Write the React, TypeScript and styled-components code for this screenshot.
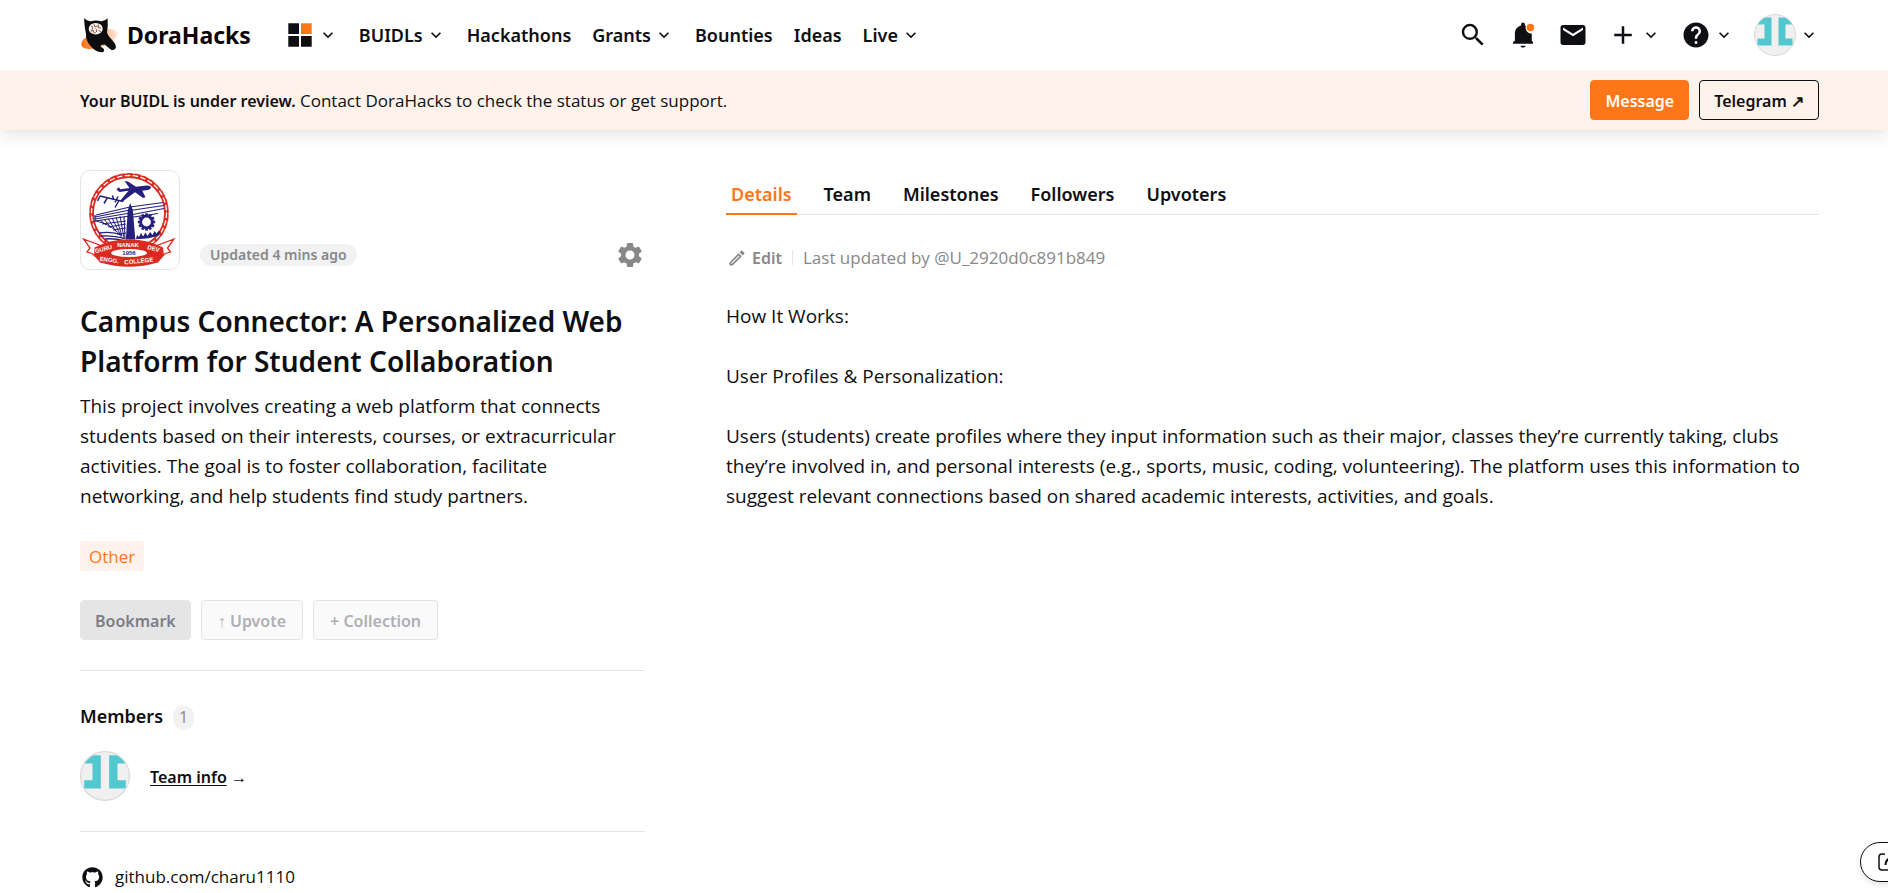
import React from "react";
import styled, { createGlobalStyle } from "styled-components";
import {
  MdAdd,
  MdEmail,
  MdExpandMore,
  MdHelp,
  MdOutlineEdit,
  MdSearch,
  MdSettings,
} from "react-icons/md";
import { FaGithub } from "react-icons/fa";

const ink = "#0e0f12";
const orange = "#ff7619";
const peach = "#fff2eb";
const muted = "#888889";
const line = "#e5e5e6";
const strongFont = `"Segoe UI", "Noto Sans", "Open Sans", sans-serif`;
const bodyFont = `"Segoe UI", "Open Sans", "Noto Sans", sans-serif`;

const GlobalStyle = createGlobalStyle`
  *, *::before, *::after { box-sizing: border-box; }
  body {
    margin: 0;
    background: #fff;
    color: ${ink};
    font: 400 19px/30px ${bodyFont};
  }
  h1, h2, p { margin: 0; }
  a { color: inherit; text-decoration: none; }
  button { font: inherit; color: inherit; background: none; border: 0; padding: 0; cursor: pointer; }
  svg { display: block; flex: none; }
`;

const Top = styled.div`
  position: sticky;
  top: 0;
  z-index: 2;
  background: #fff;
  box-shadow: 0 6px 14px rgba(14, 25, 25, 0.1);
`;

const Header = styled.header`
  display: flex;
  align-items: center;
  gap: 34px;
  height: 70px;
  padding: 0 69px 0 80px;
`;

const Brand = styled.a`
  display: flex;
  align-items: center;
  gap: 7px;
  font: 700 23px/30px ${strongFont};
  color: #0b0406;
`;

const Nav = styled.nav`
  display: flex;
  align-items: center;
  gap: 21px;
  font: 600 18px/30px ${strongFont};
`;

const Actions = styled.div`
  display: flex;
  align-items: center;
  gap: 20px;
  margin-left: auto;
`;

const MenuButton = styled.button`
  display: flex;
  align-items: center;
  gap: 3px;
`;

const Banner = styled.section`
  display: flex;
  align-items: center;
  gap: 10px;
  min-height: 60px;
  padding: 10px 69px 10px 80px;
  background: ${peach};
`;

const BannerText = styled.p`
  flex: 1;
  padding-top: 2px;
  font-size: 17px;
  strong {
    font: 600 16px/30px ${strongFont};
  }
`;

type Tone = "primary" | "outline" | "muted" | "ghost";

const tones: Record<Tone, string> = {
  primary: `background: ${orange}; border-color: ${orange}; color: #fff;`,
  outline: `border-color: ${ink};`,
  muted: `background: #e5e5e6; border-color: #e5e5e6; color: #7d7e85;`,
  ghost: `background: #fafafa; border-color: #e2e2e3; color: #aeafb5; padding: 2px 16px 0;`,
};

const Button = styled.button<{ $tone: Tone }>`
  height: 40px;
  padding: 2px 14px 0;
  border: 1px solid;
  border-radius: 4px;
  font: 600 16px/30px ${strongFont};
  white-space: nowrap;
  ${({ $tone }) => tones[$tone]}
`;

const Main = styled.main`
  display: grid;
  grid-template-columns: minmax(0, 565fr) minmax(0, 1093fr);
  gap: 81px;
  padding: 40px 69px 0 80px;
`;

const Identity = styled.div`
  display: flex;
  align-items: flex-end;
  gap: 20px;
`;

const ProjectLogo = styled.div`
  width: 100px;
  height: 100px;
  overflow: hidden;
  border: 1px solid ${line};
  border-radius: 10px;
`;

const IdentityMeta = styled.div`
  display: flex;
  flex: 1;
  align-items: center;
  justify-content: space-between;
  color: ${muted};
`;

const Pill = styled.span`
  padding: 0 10px;
  border-radius: 11px;
  background: #f2f2f2;
  font: 600 14px/22px ${strongFont};
`;

const Title = styled.h1`
  margin-top: 31px;
  font: 600 28px/40px ${strongFont};
`;

const Description = styled.p`
  margin-top: 10px;
`;

const Tag = styled.a`
  display: inline-block;
  margin-top: 30px;
  padding: 1px 9px 0;
  border-radius: 4px;
  background: ${peach};
  color: ${orange};
  font-size: 17px;
  line-height: 29px;
`;

const ButtonRow = styled.div`
  display: flex;
  gap: 10px;
  margin: 29px 0 30px;
`;

const Block = styled.section`
  padding: 30px 0;
  border-top: 1px solid ${line};
`;

const Heading = styled.h2`
  display: flex;
  align-items: center;
  gap: 10px;
  font: 600 18px/30px ${strongFont};
`;

const Count = styled.span`
  width: 21px;
  border-radius: 13px;
  margin-top: 3px;
  background: #f2f2f2;
  color: ${muted};
  font: 400 16px/25px ${bodyFont};
  text-align: center;
`;

const MemberRow = styled.div`
  display: flex;
  align-items: center;
  gap: 20px;
  margin-top: 20px;
`;

const TeamLink = styled.a`
  padding-top: 2px;
  font: 600 16px/30px ${strongFont};
  span {
    text-decoration: underline;
    text-underline-offset: 2px;
  }
`;

const SiteLink = styled.a`
  display: flex;
  align-items: center;
  gap: 12px;
  padding-left: 2px;
  font-size: 17px;
`;

const Tabs = styled.nav`
  display: flex;
  gap: 22px;
  margin-top: 9px;
  box-shadow: inset 0 -1px ${line};
`;

const Tab = styled.a<{ $active?: boolean }>`
  padding: 0 5px 4px;
  border-bottom: 2px solid ${({ $active }) => ($active ? orange : "transparent")};
  color: ${({ $active }) => ($active ? orange : ink)};
  font: 600 18px/30px ${strongFont};
`;

const EditRow = styled.div`
  display: flex;
  align-items: center;
  margin: 28px 0;
  color: ${muted};
  font-size: 17px;
`;

const EditButton = styled.button`
  display: flex;
  align-items: center;
  gap: 5px;
  padding: 0 10px 0 1px;
  font: 600 16px/30px ${strongFont};
`;

const Editor = styled.span`
  position: relative;
  padding-left: 11px;
  &::before {
    content: "";
    position: absolute;
    left: 0;
    top: 7px;
    height: 15px;
    border-left: 1px solid ${line};
  }
`;

const Article = styled.article`
  display: grid;
  gap: 30px;
`;

const Floating = styled.button`
  position: fixed;
  right: -32px;
  bottom: 11px;
  display: flex;
  align-items: center;
  width: 60px;
  height: 40px;
  padding-left: 16px;
  border: 1px solid ${ink};
  border-radius: 20px;
  background: #fff;
  box-shadow: 0 2px 6px rgba(0, 0, 0, 0.12);
`;

const Cat = () => (
  <svg width="40" height="46" viewBox="4 0 40 46" aria-hidden="true">
    <defs>
      <linearGradient id="orbit" x1="0" x2="1">
        <stop offset="0" stopColor="#ff7619" />
        <stop offset=".35" stopColor="#ff8f45" />
        <stop offset="1" stopColor="#ffe9dc" />
      </linearGradient>
    </defs>
    <ellipse cx="23.300" cy="27" rx="19" ry="8" fill="url(#orbit)" transform="rotate(-20 23.300 27)" />
    <path
      fill="#0d0d0f"
      d="M8.200 6Q11.500 10 15 9.200Q20 7.800 25 9.200Q28.500 9.500 31.600 6.300Q32.200 14 31 20.500Q32 24 36.500 28.500Q40.500 32.500 39.800 36Q38.500 38.800 35 37.800L28.600 32.500L25 33Q23.500 34.500 27.500 36.500Q29 39.500 26.500 40.300Q20 40.500 14.500 34Q9.500 28.500 10 22Q8 12 8.200 6Z"
    />
    <ellipse cx="19.700" cy="16.700" rx="7" ry="5.800" fill="#fff6ef" />
    <g stroke="#6b3f2e" strokeWidth=".9" fill="none" strokeLinecap="round">
      <path d="M15 14l2 1.500-1 2M18 12.500l1 2.500 2-1M22.500 13l-.5 2.500 2.500.5M15 19l2.500-.5.500 2.500M20 17l1 2-1.500 1.500M23 18.500l1.500 1" />
    </g>
  </svg>
);

const Apps = () => (
  <svg width="30" height="30" viewBox="0 0 30 30" aria-hidden="true">
    <path fill={ink} d="M3.300 3.300h10.700v10.700H3.300zM3.300 16h10.700v10.700H3.300zM16 16h10.700v10.700H16z" />
    <path fill={orange} d="M16 3.300h10.700v10.700H16z" />
  </svg>
);

const Bell = () => (
  <svg width="30" height="30" viewBox="0 0 24 24" aria-hidden="true">
    <path
      fill={ink}
      d="M12 22c1.100 0 2-.7 2-1.500h-4c0 .8.900 1.500 2 1.500zm7-5.500V10.800a4.700 4.700 0 0 1-4.700-6.200 6 6 0 0 0-.8-.3V3.500a1.500 1.500 0 0 0-3 0v.8C7.600 5 5.500 7.600 5.500 10.500v6L4 17.500V19h16v-1.500z"
    />
    <circle cx="17.900" cy="6" r="3" fill={orange} />
  </svg>
);

const Avatar = ({ size }: { size: number }) => (
  <svg width={size} height={size} viewBox="0 0 42 42" role="img" aria-label="User avatar">
    <clipPath id={`avatar-${size}`}>
      <circle cx="21" cy="21" r="20.500" />
    </clipPath>
    <g clipPath={`url(#avatar-${size})`}>
      <path fill="#f0f0f0" d="M0 0h42v42H0z" />
      <path
        fill="#52c7cf"
        d="M3.500 3.500h14v28h-14v-7h7v-14h-7zM24.500 3.500h14v7h-7v14h7v7h-14z"
      />
    </g>
    <circle cx="21" cy="21" r="20.500" fill="none" stroke="#d9d9da" />
  </svg>
);

const teeth = Array.from({ length: 12 }, (_, i) => i * 30);

const CollegeSeal = () => (
  <svg width="98" height="98" viewBox="1 1 98 98" role="img" aria-label="College seal">
    <circle cx="49" cy="43" r="37.500" fill="none" stroke="#dc2a20" strokeWidth="4.800" />
    <circle cx="49" cy="43" r="37.500" fill="none" stroke="#fff" strokeWidth="1.300" strokeDasharray="4.400 3.450" strokeLinecap="round" />
    <circle cx="49" cy="43" r="40" fill="none" stroke="#fff" strokeWidth="1" strokeDasharray="1.500 6.860" />
    <g fill="#26207c">
      <path d="M36.500 19.500l3 2.500 9-1.200L40 31l3.500-.3L56 21.500l12-1.500q4-1.500 2.500-3.500q-2-1.500-6-.8l-8.500 1L48 11.500l-3.500-.5 5 7-9 1.200-2-2z" />
      <path d="M52 20l11 8 2.500-.7-4-8z" />
      <path d="M47.800 40l2.400-7 2.600 7 2.500 29.500h-9.500z" />
    </g>
    <g fill="none" stroke="#26207c" strokeWidth="1.500">
      <path d="M20 26l23 5.500M20 26l-2.500 5M27.500 27.500l-3.500 6M39 30.500l-4 7M33.500 29l-1-3.500M43 31.500l.5-3M38 26.500l-3 6" />
      <path strokeWidth="1.200" d="M50 37L83 32.500M50 40.500L84 35.500M50 45L84 38.500M50 47.500L78 43.500M50 37L16 45M50 40L15 47M50 43L15 49M50 46L15 51M15 45v7" />
      <path strokeWidth="1" d="M16 51q17 3 27 18M20 50l6 5M24 49l7 9M28 48.500l8 13M32 48l8 16M36 47l6 19M40 46l4 22M44 46l1 23M22 54l24-3M28 57l18-3M33 60l13-2M37 64l9-1" />
      <path strokeWidth="1.300" d="M19 63q13-2 23 2M21 66q12-1 24 2.500M25 69q9-1 20 2" />
      <circle cx="66.500" cy="52" r="5.800" strokeWidth="2.800" />
    </g>
    <g fill="#26207c">
      {teeth.map((angle) => (
        <path key={angle} d="M65.300 43.300h2.400l.4 3h-3.200z" transform={`rotate(${angle} 66.500 52)`} />
      ))}
      <path d="M56 69l1-4 2 2 2-4 2 3.500 2.500-4 2 3.500 2.500-4 2.500 3 2-4 2 2.500 2.500-3 1.500 2-1.500 3q-12 4-23 3.500z" />
    </g>
    <path fill="#fff" stroke="#dc2a20" strokeWidth="1.300" d="M3.500 69l17 6.500-1 14-7.500-6-5-1.500 3-4zM94 69l-17 6.500 1 14 7.500-6 5-1.500-3-4z" />
    <path fill="#dc2a20" d="M14.500 77.500Q48.500 61 83 77.500l1 8-6 7q-29 8.500-58 0l-6-7z" />
    <ellipse cx="49" cy="83" rx="18" ry="4" fill="#fff" />
    <g fontFamily="Liberation Sans, sans-serif" fontWeight="700" textAnchor="middle" fontSize="6" fill="#fff">
      <text transform="translate(24 81) rotate(-15)">GURU</text>
      <text x="48" y="77">NANAK</text>
      <text transform="translate(73 80.500) rotate(15)">DEV</text>
      <text x="49" y="85.300" fill="#26207c">1956</text>
      <text transform="translate(29 92) rotate(7)">ENGG.</text>
      <text transform="translate(59 93) rotate(-6)">COLLEGE</text>
    </g>
  </svg>
);

const navItems = [
  { label: "BUIDLs", menu: true },
  { label: "Hackathons" },
  { label: "Grants", menu: true },
  { label: "Bounties" },
  { label: "Ideas" },
  { label: "Live", menu: true },
];

const tabs = ["Details", "Team", "Milestones", "Followers", "Upvoters"];

export default function App() {
  return (
    <>
      <GlobalStyle />
      <Top>
        <Header>
          <Brand href="#">
            <Cat />
            DoraHacks
          </Brand>
          <Nav aria-label="Main">
            <MenuButton aria-label="Apps">
              <Apps />
              <MdExpandMore size={20} />
            </MenuButton>
            {navItems.map(({ label, menu }) =>
              menu ? (
                <MenuButton key={label}>
                  {label}
                  <MdExpandMore size={20} />
                </MenuButton>
              ) : (
                <a key={label} href="#">
                  {label}
                </a>
              )
            )}
          </Nav>
          <Actions>
            <button aria-label="Search">
              <MdSearch size={30} />
            </button>
            <button aria-label="Notifications">
              <Bell />
            </button>
            <button aria-label="Messages">
              <MdEmail size={30} />
            </button>
            <MenuButton aria-label="Create">
              <MdAdd size={30} />
              <MdExpandMore size={20} />
            </MenuButton>
            <MenuButton aria-label="Help">
              <MdHelp size={30} />
              <MdExpandMore size={20} />
            </MenuButton>
            <MenuButton aria-label="Account">
              <Avatar size={42} />
              <MdExpandMore size={20} />
            </MenuButton>
          </Actions>
        </Header>
        <Banner>
          <BannerText>
            <strong>Your BUIDL is under review.</strong> Contact DoraHacks to check the status or get support.
          </BannerText>
          <Button $tone="primary">Message</Button>
          <Button $tone="outline">Telegram ↗</Button>
        </Banner>
      </Top>

      <Main>
        <aside>
          <Identity>
            <ProjectLogo>
              <CollegeSeal />
            </ProjectLogo>
            <IdentityMeta>
              <Pill>Updated 4 mins ago</Pill>
              <button aria-label="Settings">
                <MdSettings size={30} />
              </button>
            </IdentityMeta>
          </Identity>
          <Title>Campus Connector: A Personalized Web Platform for Student Collaboration</Title>
          <Description>
            This project involves creating a web platform that connects students based on their interests, courses, or
            extracurricular activities. The goal is to foster collaboration, facilitate networking, and help students
            find study partners.
          </Description>
          <Tag href="#">Other</Tag>
          <ButtonRow>
            <Button $tone="muted">Bookmark</Button>
            <Button $tone="ghost">↑ Upvote</Button>
            <Button $tone="ghost">+ Collection</Button>
          </ButtonRow>
          <Block>
            <Heading>
              Members <Count>1</Count>
            </Heading>
            <MemberRow>
              <Avatar size={50} />
              <TeamLink href="#">
                <span>Team info</span> →
              </TeamLink>
            </MemberRow>
          </Block>
          <Block>
            <SiteLink href="#">
              <FaGithub size={21} />
              github.com/charu1110
            </SiteLink>
          </Block>
        </aside>

        <section>
          <Tabs aria-label="Project sections">
            {tabs.map((tab, i) => (
              <Tab key={tab} href="#" $active={i === 0}>
                {tab}
              </Tab>
            ))}
          </Tabs>
          <EditRow>
            <EditButton>
              <MdOutlineEdit size={20} />
              Edit
            </EditButton>
            <Editor>Last updated by @U_2920d0c891b849</Editor>
          </EditRow>
          <Article>
            <p>How It Works:</p>
            <p>User Profiles &amp; Personalization:</p>
            <p>
              Users (students) create profiles where they input information such as their major, classes they’re
              currently taking, clubs they’re involved in, and personal interests (e.g., sports, music, coding,
              volunteering). The platform uses this information to suggest relevant connections based on shared academic
              interests, activities, and goals.
            </p>
          </Article>
        </section>
      </Main>

      <Floating aria-label="Open assistant">
        <svg width="22" height="20" viewBox="0 0 22 20" fill="none" stroke={ink} aria-hidden="true">
          <path strokeWidth="1.500" d="M8 2H5Q2 2 2 5v10q0 3 3 3h14" />
          <path strokeWidth="2" d="M8.500 13q0-5 5-7" />
        </svg>
      </Floating>
    </>
  );
}
